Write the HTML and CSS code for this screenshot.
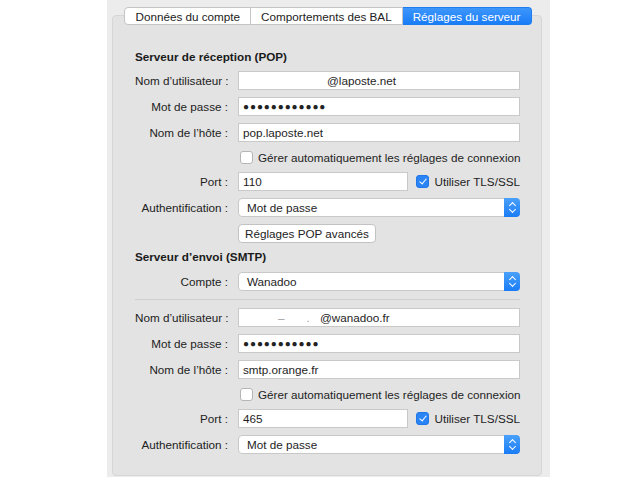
FILE: index.html
```html
<!DOCTYPE html>
<html lang="fr">
<head>
  <meta charset="UTF-8">
  <title>Réglages du serveur</title>
  <link rel="stylesheet" href="styles.css">
</head>
<body>
  <div class="window">
    <div class="tabbox">
      <div class="tabs">
        <div class="tab">Données du compte</div>
        <div class="tab">Comportements des BAL</div>
        <div class="tab active">Réglages du serveur</div>
      </div>

      <div class="content">
        <h3>Serveur de réception (POP)</h3>
        <div class="form">
          <label>Nom d’utilisateur :</label>
          <div class="field"><span class="hidden-part"></span>@laposte.net</div>

          <label>Mot de passe :</label>
          <div class="field dots">●●●●●●●●●●●●</div>

          <label>Nom de l’hôte :</label>
          <div class="field">pop.laposte.net</div>

          <span></span>
          <div class="check"><span class="box"></span>Gérer automatiquement les réglages de connexion</div>

          <label>Port :</label>
          <div class="port-row">
            <div class="field port">110</div>
            <div class="check"><span class="box on"></span>Utiliser TLS/SSL</div>
          </div>

          <label>Authentification :</label>
          <div class="select">Mot de passe<span class="arrows"></span></div>

          <span></span>
          <div><button class="btn">Réglages POP avancés</button></div>
        </div>

        <h3 class="second">Serveur d’envoi (SMTP)</h3>
        <div class="form account">
          <label>Compte :</label>
          <div class="select">Wanadoo<span class="arrows"></span></div>
        </div>
        <hr>
        <div class="form tight">
          <label>Nom d’utilisateur :</label>
          <div class="field"><span class="hidden-part short"><i>–</i><i>.</i></span>@wanadoo.fr</div>

          <label>Mot de passe :</label>
          <div class="field dots">●●●●●●●●●●●</div>

          <label>Nom de l’hôte :</label>
          <div class="field">smtp.orange.fr</div>

          <span></span>
          <div class="check"><span class="box"></span>Gérer automatiquement les réglages de connexion</div>

          <label>Port :</label>
          <div class="port-row">
            <div class="field port">465</div>
            <div class="check"><span class="box on"></span>Utiliser TLS/SSL</div>
          </div>

          <label>Authentification :</label>
          <div class="select">Mot de passe<span class="arrows"></span></div>
        </div>
      </div>
    </div>
  </div>
</body>
</html>
```

FILE: styles.css
```css
* {
  margin: 0;
  padding: 0;
  box-sizing: border-box;
}

body {
  background: #ffffff;
  font-family: "Liberation Sans", Arial, sans-serif;
  font-size: 11.7px;
  color: #1e1e1e;
}

.window {
  margin-left: 107px;
  width: 443px;
  height: 477px;
  background: #ececec;
  padding: 15px 8px 0 5px;
}

.tabbox {
  height: 461px;
  background: #e3e3e3;
  border: 1px solid #d6d6d6;
  border-radius: 4px;
}

.tabs {
  display: flex;
  justify-content: center;
  margin-top: -9px;
  padding-left: 2px;
}

.tab {
  height: 18px;
  line-height: 17px;
  background: #ffffff;
  border: 1px solid #c4c4c4;
  border-left: none;
  padding: 0 10px;
  color: #222;
  white-space: nowrap;
}

.tab:first-child {
  border-left: 1px solid #c4c4c4;
  border-radius: 4px 0 0 4px;
}

.tab.active {
  background: linear-gradient(#3d96fb, #1a7df7);
  border-color: #1c7cf0;
  color: #ffffff;
  border-radius: 0 4px 4px 0;
}

.content {
  padding: 23px 21px 0 22px;
}

h3 {
  font-size: 11.7px;
  font-weight: bold;
  height: 18px;
  line-height: 18px;
  color: #1a1a1a;
}

h3.second {
  margin-top: 5px;
}

.form {
  display: grid;
  grid-template-columns: 93px 282px;
  column-gap: 10px;
  row-gap: 7px;
  align-items: center;
  margin-top: 5px;
}

.form.account {
  margin-top: 6px;
}

.form label {
  text-align: right;
  white-space: nowrap;
  color: #222;
}

.field {
  height: 19px;
  line-height: 17px;
  background: #ffffff;
  border: 1px solid #c9c9c9;
  padding: 0 4px;
  white-space: nowrap;
  overflow: hidden;
}

.hidden-part {
  display: inline-block;
  width: 84px;
}

.hidden-part.short {
  width: 77px;
  color: #9a9a9a;
}

.hidden-part i {
  font-style: normal;
  margin-left: 35px;
}

.hidden-part i + i {
  margin-left: 22px;
}

.dots {
  font-size: 10px;
  letter-spacing: 0.9px;
  color: #222;
}

.check {
  display: flex;
  align-items: center;
  gap: 5px;
  height: 16px;
  white-space: nowrap;
}

.box {
  flex-shrink: 0;
  width: 13px;
  height: 13px;
  border: 1px solid #b5b5b5;
  border-radius: 3px;
  background: #ffffff;
  margin-left: 2px;
  position: relative;
}

.box.on {
  background: #2a84f6;
  border-color: #2176e8;
}

.box.on::after {
  content: '';
  position: absolute;
  left: 3.5px;
  top: 1px;
  width: 3px;
  height: 6px;
  border: solid #ffffff;
  border-width: 0 1.6px 1.6px 0;
  transform: rotate(40deg);
}

.port-row {
  display: flex;
  align-items: center;
  justify-content: space-between;
}

.port {
  width: 170px;
}

.select {
  height: 19px;
  line-height: 17px;
  background: #ffffff;
  border: 1px solid #c8c8c8;
  border-radius: 4px;
  padding: 0 8px;
  position: relative;
}

.arrows {
  position: absolute;
  right: -1px;
  top: -1px;
  width: 16px;
  height: 19px;
  background: linear-gradient(#4aa1fc, #1a7cf6);
  border-radius: 0 4px 4px 0;
}

.arrows::before,
.arrows::after {
  content: '';
  position: absolute;
  left: 5.5px;
  width: 4px;
  height: 4px;
  border: solid #ffffff;
  border-width: 1.4px 0 0 1.4px;
}

.arrows::before {
  top: 5px;
  transform: rotate(45deg);
}

.arrows::after {
  top: 9px;
  transform: rotate(225deg);
}

.btn {
  font-family: inherit;
  font-size: 11.7px;
  height: 19px;
  padding: 0 6px;
  background: #ffffff;
  border: 1px solid #c2c2c2;
  border-radius: 4px;
  color: #222;
}

hr {
  border: none;
  border-top: 1px solid #cfcfcf;
  margin: 8px 0 8px 0;
}

.tight {
  margin-top: 0;
}
```
